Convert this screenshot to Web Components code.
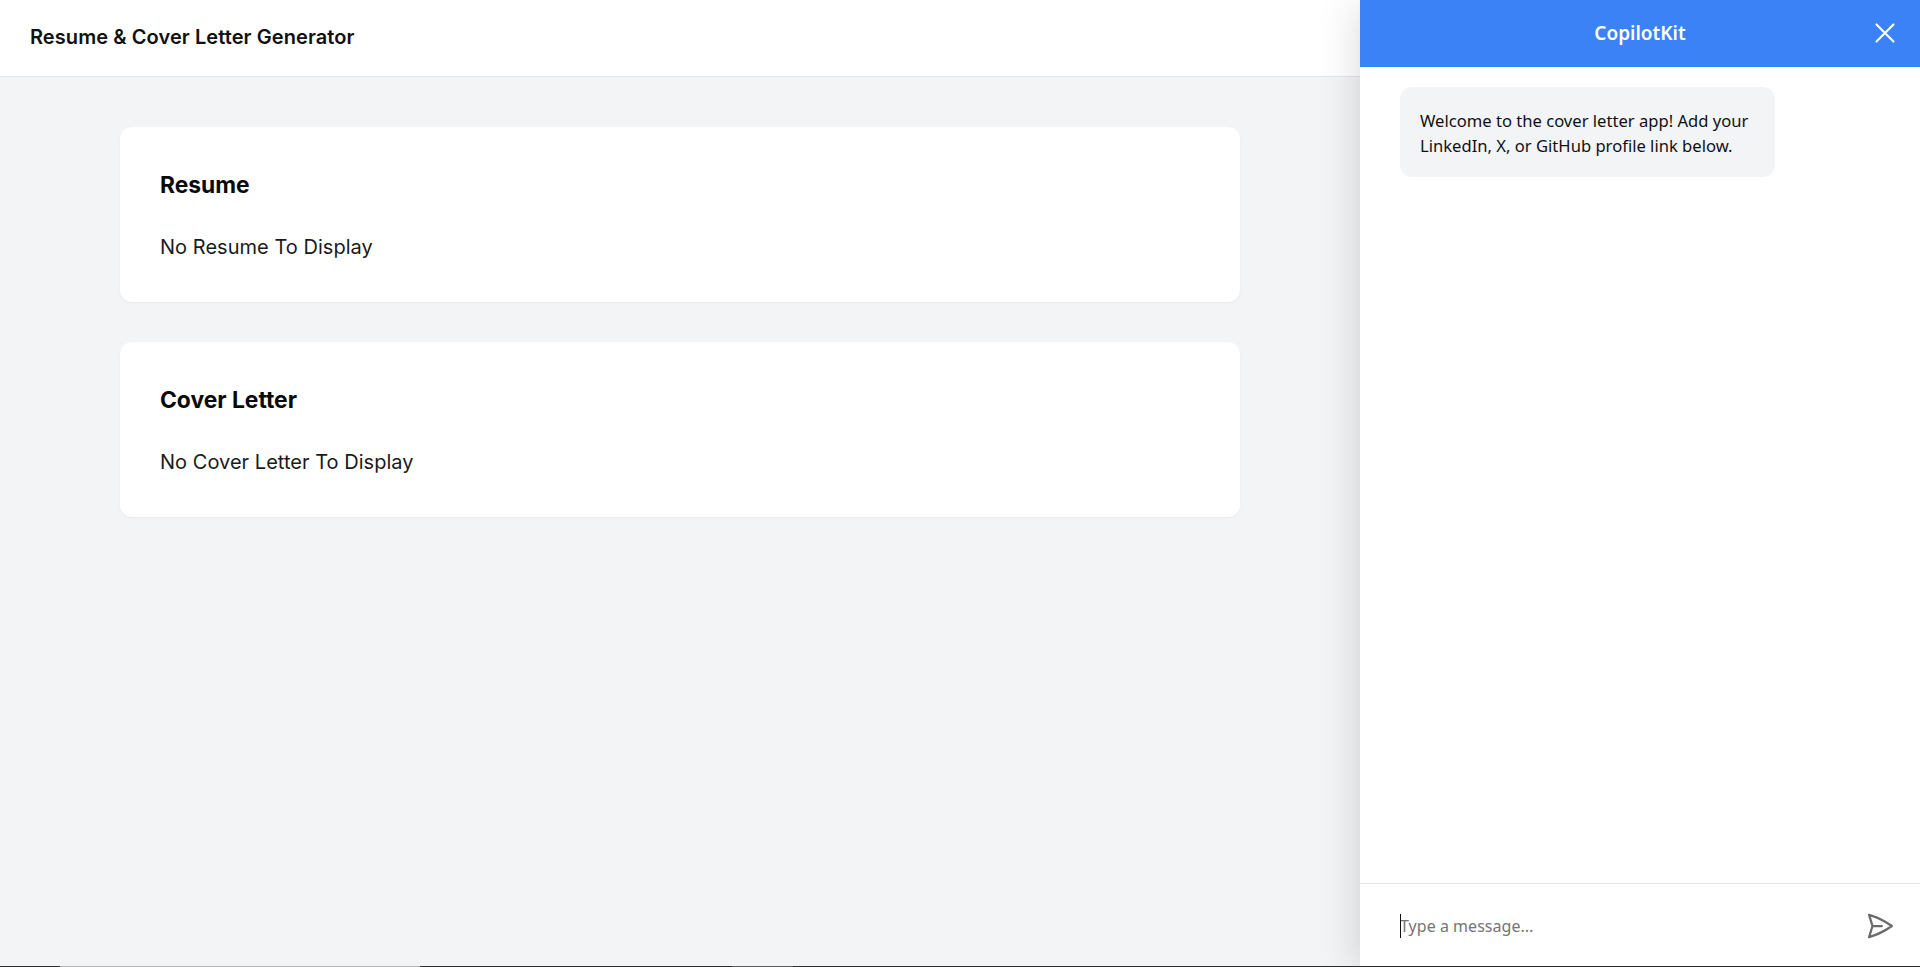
<!DOCTYPE html>
<html>
<head>
<meta charset="utf-8">
<title>Resume & Cover Letter Generator</title>
<style>
    html, body {
        margin: 0;
        height: 100%;
        overflow: hidden;
    }
    body {
        display: flex;
        flex-direction: column;
        background: #f3f4f6;
        font-family: Inter, "Liberation Sans", sans-serif;
    }
</style>
</head>
<body>
<app-shell>
    <app-header slot="main">Resume &amp; Cover Letter Generator</app-header>
    <doc-card slot="main" heading="Resume">No Resume To Display</doc-card>
    <doc-card slot="main" heading="Cover Letter">No Cover Letter To Display</doc-card>
    <chat-panel slot="chat" title-text="CopilotKit">
        <chat-bubble>Welcome to the cover letter app! Add your LinkedIn, X, or GitHub profile link below.</chat-bubble>
    </chat-panel>
</app-shell>
<task-strip></task-strip>

<script>
class AppShell extends HTMLElement {
    constructor() {
        super()
        this.attachShadow({mode: 'open'}).innerHTML = `
        <style>
            :host {
                display: flex;
                flex: 1;
                min-height: 0;
            }
            .main {
                flex: 1;
                min-width: 0;
                display: grid;
                grid-template-columns: 120px 1fr 120px;
                grid-auto-rows: max-content;
                row-gap: 40px;
            }
            ::slotted(app-header) {
                grid-column: 1 / -1;
                margin-bottom: 10px;
            }
            ::slotted(doc-card) {
                grid-column: 2;
            }
        </style>
        <div class="main"><slot name="main"></slot></div>
        <slot name="chat"></slot>`
    }
}

class AppHeader extends HTMLElement {
    constructor() {
        super()
        this.attachShadow({mode: 'open'}).innerHTML = `
        <style>
            :host {
                display: flex;
                align-items: center;
                height: 74px;
                padding: 0 0 2px 30px;
                background: #fff;
                border-bottom: 1px solid #e5e7eb;
                font-size: 20px;
                letter-spacing: 0.08px;
                font-weight: 600;
                color: #111;
            }
        </style>
        <slot></slot>`
    }
}

class DocCard extends HTMLElement {
    constructor() {
        super()
        this.attachShadow({mode: 'open'}).innerHTML = `
        <style>
            :host {
                display: block;
                height: 175px;
                box-sizing: border-box;
                padding: 41px 40px 0;
                background: #fff;
                border-radius: 12px;
                box-shadow: 0 1px 2px rgba(0, 0, 0, 0.05);
            }
            h2 {
                margin: 0 0 32px;
                font-size: 22.8px;
                line-height: 33px;
                font-weight: 700;
                color: #0a0a0a;
            }
            p {
                margin: 0;
                font-size: 20px;
                letter-spacing: 0.03px;
                line-height: 28px;
                color: #1a1a1a;
            }
        </style>
        <h2></h2>
        <p><slot></slot></p>`
        this.shadowRoot.querySelector('h2').textContent = this.getAttribute('heading')
    }
}

class ChatPanel extends HTMLElement {
    constructor() {
        super()
        this.attachShadow({mode: 'open'}).innerHTML = `
        <style>
            :host {
                display: flex;
                flex-direction: column;
                width: 560px;
                flex: none;
                position: relative;
                background: #fff;
                box-shadow: 0 5px 40px rgba(0, 0, 0, 0.16);
                font-family: "Noto Sans", "Open Sans", sans-serif;
            }
            header {
                display: flex;
                align-items: center;
                justify-content: center;
                height: 67px;
                padding-bottom: 2px;
                box-sizing: border-box;
                background: #3b82f6;
                color: #fff;
                font-size: 19px;
                font-weight: 600;
                position: relative;
            }
            .close {
                position: absolute;
                right: 18px;
                top: 16px;
                width: 34px;
                height: 34px;
            }
            .messages {
                flex: 1;
                padding: 20px 40px;
            }
            footer {
                display: flex;
                align-items: center;
                justify-content: space-between;
                height: 83px;
                box-sizing: border-box;
                padding: 2px 25px 0 40px;
                border-top: 1px solid #e5e7eb;
            }
            .field {
                position: relative;
                font-size: 16px;
                letter-spacing: 0.03px;
                line-height: 24px;
                color: #757575;
            }
            .caret {
                position: absolute;
                left: 0;
                top: 0;
                width: 1px;
                height: 24px;
                background: #111;
            }
            .send {
                width: 30px;
                height: 30px;
                color: #6b6b6b;
            }
        </style>
        <header>
            <span class="title"></span>
            <svg class="close" viewBox="0 0 24 24" fill="none" stroke="currentColor" stroke-width="1.5" stroke-linecap="round" stroke-linejoin="round"><path d="M6 18L18 6M6 6l12 12"/></svg>
        </header>
        <div class="messages"><slot></slot></div>
        <footer>
            <div class="field"><span class="caret"></span>Type a message...</div>
            <svg class="send" viewBox="0 0 24 24" fill="none" stroke="currentColor" stroke-width="1.8" stroke-linecap="round" stroke-linejoin="round"><path d="M6 12L3.269 3.126A59.768 59.768 0 0121.485 12 59.77 59.77 0 013.27 20.876L5.999 12zm0 0h7.5"/></svg>
        </footer>`
        this.shadowRoot.querySelector('.title').textContent = this.getAttribute('title-text')
    }
}

class ChatBubble extends HTMLElement {
    constructor() {
        super()
        this.attachShadow({mode: 'open'}).innerHTML = `
        <style>
            :host {
                display: block;
                width: 375px;
                box-sizing: border-box;
                padding: 21px 20px 19px;
                background: #f3f4f6;
                border-radius: 12px;
                font-size: 16.6px;
                line-height: 25px;
                color: #111;
            }
        </style>
        <slot></slot>`
    }
}

// thin dark line along the very bottom of the window
class TaskStrip extends HTMLElement {
    constructor() {
        super()
        this.attachShadow({mode: 'open'}).innerHTML = `
        <style>
            :host {
                display: flex;
                flex: none;
                height: 1px;
                background: #2e2e2e;
            }
            .gap { width: 60px; }
            .light { width: 360px; background: #b5b5b5; }
            .mid { width: 312px; }
            .grey { width: 61px; background: #5c5c5c; }
        </style>
        <span class="gap"></span><span class="light"></span><span class="mid"></span><span class="grey"></span>`
    }
}

customElements.define('app-shell', AppShell)
customElements.define('app-header', AppHeader)
customElements.define('doc-card', DocCard)
customElements.define('chat-panel', ChatPanel)
customElements.define('chat-bubble', ChatBubble)
customElements.define('task-strip', TaskStrip)
</script>
</body>
</html>
